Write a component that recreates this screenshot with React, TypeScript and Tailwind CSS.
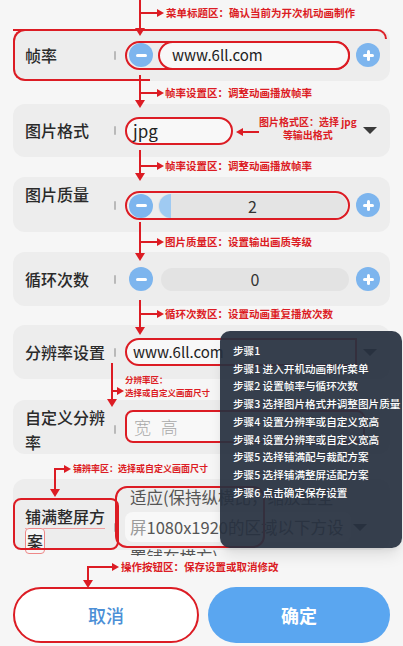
const RED = "bg-[#dc1c24]";

// Callout pieces: vertical arrow pointing down, horizontal arrow, red note text
function VArrow({ pos }: { pos: string }) {
  return (
    <div className={`absolute z-20 flex w-[10px] flex-col items-center ${pos}`}>
      <div className={`w-[2px] flex-1 ${RED}`} />
      <div className="h-0 w-0 border-x-[5px] border-t-[8px] border-x-transparent border-t-[#dc1c24]" />
    </div>
  );
}

function HArrow({ pos, left = false }: { pos: string; left?: boolean }) {
  return (
    <div className={`absolute z-20 flex h-[8px] items-center ${pos}`}>
      {left && (
        <div className="h-0 w-0 border-y-[4px] border-r-[7px] border-y-transparent border-r-[#dc1c24]" />
      )}
      <div className={`h-[2px] flex-1 ${RED}`} />
      {!left && (
        <div className="h-0 w-0 border-y-[4px] border-l-[7px] border-y-transparent border-l-[#dc1c24]" />
      )}
    </div>
  );
}

function NoteText({ pos, children }: { pos: string; children: React.ReactNode }) {
  return (
    <div className={`absolute z-20 whitespace-nowrap font-bold leading-none text-[#dc1c24] ${pos}`}>
      {children}
    </div>
  );
}

function Card({ h, children }: { h: string; children: React.ReactNode }) {
  return <div className={`relative mx-[13px] rounded-xl bg-[#ededed] ${h}`}>{children}</div>;
}

function Label({ children, pos = "" }: { children: React.ReactNode; pos?: string }) {
  return (
    <div className={`w-[89px] shrink-0 text-[16px] font-medium leading-[25px] text-[#2a2a2a] ${pos}`}>
      {children}
    </div>
  );
}

function Divider() {
  return <div className="h-[9px] w-[2px] shrink-0 rounded bg-[#b9b9b9]" />;
}

function RoundBtn({ plus = false }: { plus?: boolean }) {
  return (
    <div className="relative flex h-[24px] w-[24px] shrink-0 items-center justify-center rounded-full bg-[#7db5ee]">
      <div className="h-[3px] w-[11px] rounded-full bg-white" />
      {plus && <div className="absolute h-[11px] w-[3px] rounded-full bg-white" />}
    </div>
  );
}

function Caret() {
  return (
    <div className="h-0 w-0 border-x-[7px] border-t-[7px] border-x-transparent border-t-[#3a3a3a]" />
  );
}

const steps = [
  "步骤1",
  "步骤1 进入开机动画制作菜单",
  "步骤2 设置帧率与循环次数",
  "步骤3 选择图片格式并调整图片质量",
  "步骤4 设置分辨率或自定义宽高",
  "步骤4 设置分辨率或自定义宽高",
  "步骤5 选择铺满配与裁配方案",
  "步骤5 选择铺满整屏适配方案",
  "步骤6 点击确定保存设置",
];

export default function App() {
  return (
    <div className="relative h-[646px] w-[403px] overflow-hidden bg-[#f6f6f6] font-['Noto_Sans_CJK_SC','Noto_Sans',sans-serif]">
      {/* 菜单标题 */}
      <div className="relative h-[29px]">
        <VArrow pos="left-[135px] top-0 h-[36px]" />
        <HArrow pos="left-[141px] top-[9px] w-[23px]" />
        <NoteText pos="left-[166px] top-[8px] text-[10.5px]">菜单标题区：确认当前为开次机动画制作</NoteText>
      </div>

      {/* 帧率 */}
      <Card h="h-[52px]">
        <div className="pointer-events-none absolute left-0 right-[3px] top-0 z-10 h-[10px] rounded-tr-xl border-r-2 border-t-2 border-[#dc1c24]" />
        <div className="pointer-events-none absolute bottom-0 left-0 top-0 z-10 w-[137px] rounded-l-xl border-b-2 border-l-2 border-t-2 border-[#dc1c24]" />
        <div className="flex h-full items-center pl-[12px] pr-[10px]">
          <Label>帧率</Label>
          <Divider />
          <div className="ml-[9px] flex h-[29px] flex-1 items-center rounded-full border-2 border-[#dc1c24]">
            <div className="ml-[2px]">
              <RoundBtn />
            </div>
            <div className="-my-[2px] -mr-[2px] ml-[5px] flex h-[29px] flex-1 items-center rounded-full border-2 border-[#dc1c24] bg-[#f8f8f8] pl-[12px] text-[15px] text-[#222]">
              www.6ll.com
            </div>
          </div>
          <div className="ml-[6px]">
            <RoundBtn plus />
          </div>
        </div>
      </Card>

      <div className="relative h-[23px]">
        <VArrow pos="left-[135px] -top-[6px] h-[33px]" />
        <HArrow pos="left-[141px] top-[8px] w-[23px]" />
        <NoteText pos="left-[165px] top-[7px] text-[10.5px]">帧率设置区：调整动画播放帧率</NoteText>
      </div>

      {/* 图片格式 */}
      <Card h="h-[53px]">
        <div className="flex h-full items-center pl-[12px] pr-[13px]">
          <Label>图片格式</Label>
          <Divider />
          <div className="ml-[9px] flex h-[28px] w-[108px] items-center rounded-full border-2 border-[#dc1c24] bg-[#f8f8f8] pl-[6px] text-[17px] text-[#222]">
            jpg
          </div>
          <div className="flex-1" />
          <Caret />
        </div>
        <HArrow left pos="left-[223px] top-[24px] w-[23px]" />
        <div className="absolute left-[246px] top-[11px] z-20 text-center text-[10px] font-bold leading-[13px] text-[#dc1c24]">
          图片格式区：选择 jpg
          <br />
          等输出格式
        </div>
      </Card>

      <div className="relative h-[20px]">
        <VArrow pos="left-[135px] -top-[7px] h-[31px]" />
        <HArrow pos="left-[141px] top-[5px] w-[23px]" />
        <NoteText pos="left-[165px] top-[4px] text-[10.5px]">帧率设置区：调整动画播放帧率</NoteText>
      </div>

      {/* 图片质量 */}
      <Card h="h-[55px]">
        <div className="flex h-full items-start pl-[12px] pr-[10px]">
          <Label pos="mt-[5px]">图片质量</Label>
          <div className="mt-[24px]">
            <Divider />
          </div>
          <div className="ml-[9px] mt-[14px] flex h-[29px] flex-1 items-center rounded-full border-2 border-[#dc1c24]">
            <div className="ml-[2px]">
              <RoundBtn />
            </div>
            <div className="relative ml-[5px] mr-[1px] flex h-[24px] flex-1 items-center justify-center rounded-full bg-[#e4e4e4] text-[16px] text-[#333]">
              <div className="absolute left-[1px] h-[24px] w-[12px] rounded-l-full bg-[#9fcaf2]" />
              2
            </div>
          </div>
          <div className="ml-[6px] mt-[16px]">
            <RoundBtn plus />
          </div>
        </div>
      </Card>

      <div className="relative h-[20px]">
        <VArrow pos="left-[135px] -top-[10px] h-[39px]" />
        <HArrow pos="left-[141px] top-[6px] w-[23px]" />
        <NoteText pos="left-[165px] top-[5px] text-[10.5px]">图片质量区：设置输出画质等级</NoteText>
      </div>

      {/* 循环次数 */}
      <Card h="h-[54px]">
        <div className="flex h-full items-center pl-[12px] pr-[10px]">
          <Label>循环次数</Label>
          <Divider />
          <div className="ml-[13px]">
            <RoundBtn />
          </div>
          <div className="ml-[8px] flex h-[23px] flex-1 items-center justify-center rounded-full bg-[#e3e3e3] text-[16px] text-[#333]">
            0
          </div>
          <div className="ml-[7px]">
            <RoundBtn plus />
          </div>
        </div>
      </Card>

      <div className="relative h-[19px]">
        <VArrow pos="left-[135px] -top-[6px] h-[35px]" />
        <HArrow pos="left-[141px] top-[4px] w-[23px]" />
        <NoteText pos="left-[165px] top-[3px] text-[10.5px]">循环次数区：设置动画重复播放次数</NoteText>
      </div>

      {/* 分辨率设置 */}
      <Card h="h-[54px]">
        <div className="flex h-full items-center pl-[12px] pr-[13px]">
          <Label>分辨率设置</Label>
          <Divider />
          <div className="ml-[9px] flex h-[28px] w-[232px] items-center rounded-l-full rounded-r-lg border-2 border-[#dc1c24] bg-[#f8f8f8] pl-[6px] text-[15px] text-[#222]">
            www.6ll.com
          </div>
          <div className="flex-1" />
          <Caret />
        </div>
      </Card>

      <div className="relative h-[21px]">
        <VArrow pos="left-[107px] -top-[16px] h-[44px]" />
        <HArrow pos="left-[113px] top-[8px] w-[11px]" />
        <div className="absolute left-[125px] -top-[6px] z-20 text-[8.5px] font-bold leading-[13px] text-[#dc1c24]">
          分辨率区：
          <br />
          选择或自定义画面尺寸
        </div>
      </div>

      {/* 自定义分辨率 */}
      <Card h="h-[54px]">
        <div className="flex h-full items-start pl-[12px]">
          <Label pos="mt-[5px]">自定义分辨率</Label>
          <div className="mt-[25px]">
            <Divider />
          </div>
          <div className="ml-[9px] mt-[10px] flex h-[33px] w-[240px] items-center rounded-lg border-2 border-[#dc1c24] bg-[#f8f8f8] pl-[7px] text-[17px] font-light tracking-[3px] text-[#a8a8a8]">
            宽 高
          </div>
        </div>
      </Card>

      <div className="relative h-[25px]">
        <VArrow pos="left-[50px] top-[14px] h-[29px]" />
        <HArrow pos="left-[55px] top-[11px] w-[16px]" />
        <NoteText pos="left-[73px] top-[10px] text-[9px]">铺辨率区：选择或自定义画面尺寸</NoteText>
      </div>

      {/* 铺满整屏方案 */}
      <Card h="h-[71px]">
        <div className="pointer-events-none absolute bottom-0 left-0 top-[19px] z-10 w-[106px] rounded-lg border-2 border-[#dc1c24]" />
        <div className="pointer-events-none absolute bottom-[2px] left-[102px] top-[7px] z-10 w-[150px] rounded-xl border-2 border-[#dc1c24]" />
        <div className="flex h-full items-start pl-[12px]">
          <Label pos="mt-[25px]">
            <span className="border-b border-[#f0a0a0]">铺满整屏方</span>
            <span className="rounded-sm border border-[#e88] bg-[#f7f7f7] px-[1px]">案</span>
          </Label>
          <div className="mt-[44px]">
            <Divider />
          </div>
          <div className="ml-[9px] h-[77px] flex-1 overflow-hidden pl-[5px] pr-[23px] text-[16.5px] leading-[30px] text-[#555]">
            <div className="mt-[3px] whitespace-nowrap">适应(保持纵横比，缩放至全</div>
            <div className="flex items-center">
              <div className="-ml-[5px] whitespace-nowrap rounded-lg bg-[#f8f8f8] pl-[5px] pr-2">
                <span className="text-[#9a9a9a]">屏</span>1080x1920的区域以下方设
              </div>
              <div className="flex-1" />
              <Caret />
            </div>
            <div className="whitespace-nowrap">置铺在横方)</div>
          </div>
        </div>
      </Card>

      <div className="relative h-[37px]">
        <VArrow pos="left-[83px] top-[16px] h-[22px]" />
        <HArrow pos="left-[88px] top-[13px] w-[31px]" />
        <NoteText pos="left-[121px] top-[12px] text-[10.5px]">操作按钮区：保存设置或取消修改</NoteText>
      </div>

      {/* 底部按钮 */}
      <div className="flex gap-[9px] px-[13px]">
        <button className="flex h-[56px] flex-1 items-center justify-center rounded-full border-2 border-[#dc1c24] bg-white text-[18px] font-medium text-[#4b8fd6]">
          取消
        </button>
        <button className="flex h-[56px] flex-1 items-center justify-center rounded-full bg-[#5aa6f0] text-[18px] font-bold text-white">
          确定
        </button>
      </div>

      {/* 步骤浮层 */}
      <div className="absolute left-[220px] top-[331px] z-30 h-[217px] w-[182px] rounded-[10px] bg-[#27303f]/[0.93] pl-[13px] pt-[11px] shadow-lg">
        {steps.map((s, i) => (
          <div key={i} className="whitespace-nowrap text-[10.6px] font-medium leading-[17.7px] text-white">
            {s}
          </div>
        ))}
      </div>
    </div>
  );
}
